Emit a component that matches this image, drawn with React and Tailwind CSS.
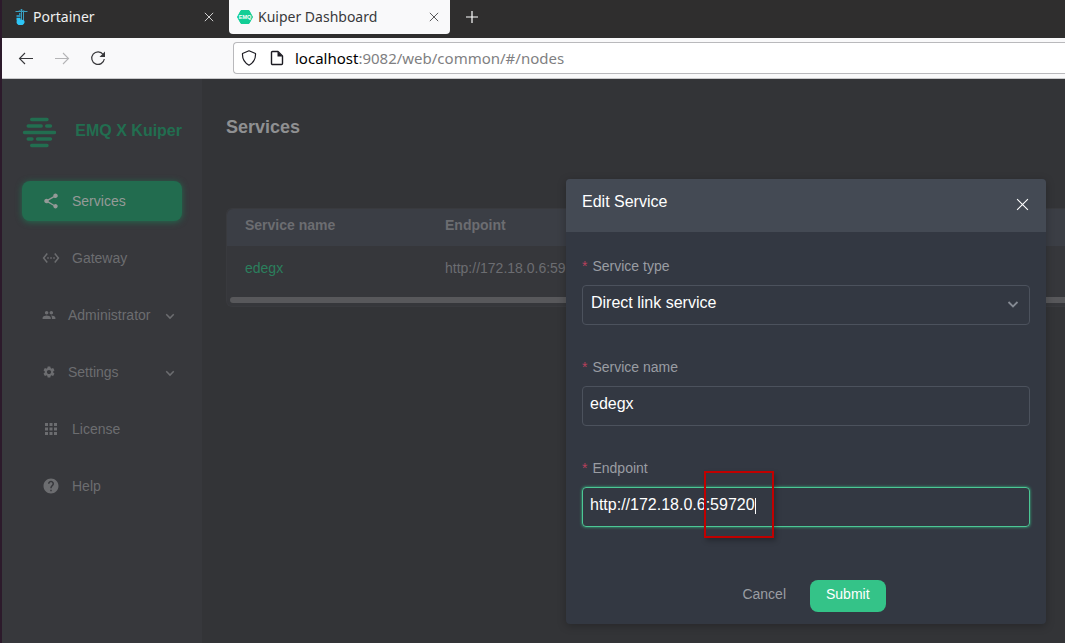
import React, { useState } from "react";
import {
  MdApps,
  MdGroup,
  MdHelp,
  MdSettings,
  MdSettingsEthernet,
  MdShare,
} from "react-icons/md";

const NAV_ITEMS = [
  { label: "Services", icon: MdShare, active: true },
  { label: "Gateway", icon: MdSettingsEthernet },
  { label: "Administrator", icon: MdGroup, expandable: true },
  { label: "Settings", icon: MdSettings, expandable: true },
  { label: "License", icon: MdApps },
  { label: "Help", icon: MdHelp },
];

function Cross({ className }) {
  return (
    <svg viewBox="0 0 12 12" className={className} fill="none" stroke="currentColor" aria-hidden="true">
      <path d="M1 1l10 10M11 1L1 11" />
    </svg>
  );
}

function Chevron({ className }) {
  return (
    <svg viewBox="0 0 12 12" className={className} fill="none" stroke="currentColor" strokeWidth="1.8" aria-hidden="true">
      <path d="M1.5 4L6 8.5 10.5 4" />
    </svg>
  );
}

function PortainerIcon() {
  return (
    <svg viewBox="0 0 16 16" className="w-4 h-4" aria-hidden="true">
      <g fill="none" stroke="#3a9fc0">
        <path d="M3.500 2.500h12M9.500 0v11M11.500 2.500v9" strokeWidth="1" />
        <path d="M6 2.500L9.500.5 13 2.500" strokeWidth=".7" />
      </g>
      <path d="M7 4h1.500v3H7zM4.500 6h4v2h-4z" fill="#2a8fb5" />
      <path d="M4.500 8.800h4v1.700l3 .5c2 1.500 1 4-1 5H6.500c-2-1-2.500-3-1.500-4.500h-.5z" fill="#2ec5f5" />
    </svg>
  );
}

function EmqIcon() {
  return (
    <svg viewBox="0 0 16 16" className="w-4 h-4" aria-hidden="true">
      <path d="M4 1.500h8l3.500 6.500-3.500 6.500H4L.5 8z" fill="#13ce96" stroke="#13ce96" strokeLinejoin="round" />
      <text x="8" y="10" textAnchor="middle" fontSize="5.5" fontWeight="bold" fill="#fff" fontFamily="Liberation Sans, sans-serif">
        EMQ
      </text>
    </svg>
  );
}

function KuiperLogo() {
  return (
    <svg viewBox="0 0 34 32" className="w-[34px] h-8" stroke="#226e50" strokeWidth="3.4" strokeLinecap="round" aria-hidden="true">
      <path d="M9.700 2.500h15.300M6.200 9h13M24.700 9h3.800M2.500 15.500h30M6.200 22h3.800M15.500 22h13M9.700 28.500h15.300" />
    </svg>
  );
}

function BrowserChrome() {
  return (
    <header className="font-['Noto_Sans',sans-serif]">
      <div className="flex items-start h-[38px] bg-[#2f2e2e] text-[14px] leading-[34px]">
        <div className="flex items-center w-[227px] h-[34px] pl-[10px] pr-[15px] text-[#f0f0f0]">
          <PortainerIcon />
          <span className="ml-[5px] flex-1">Portainer</span>
          <button aria-label="Close Portainer tab">
            <Cross className="w-[10px] h-[10px]" />
          </button>
        </div>
        <div className="flex items-center w-[221px] h-[34px] pl-2 pr-[11px] rounded-b bg-[#f9f9fa] text-[#3a3a3c]">
          <EmqIcon />
          <span className="ml-[5px] flex-1">Kuiper Dashboard</span>
          <button aria-label="Close Kuiper Dashboard tab">
            <Cross className="w-[10px] h-[10px]" />
          </button>
        </div>
        <button aria-label="New tab" className="flex items-center h-[34px] ml-4 text-white">
          <svg viewBox="0 0 12 12" className="w-3 h-3" stroke="currentColor" strokeWidth="1.2" aria-hidden="true">
            <path d="M6 0v12M0 6h12" />
          </svg>
        </button>
      </div>

      <div className="flex items-center h-[41px] pl-4 bg-[#f9f9fa] border-b border-[#c8c8ca] text-[#38383b]">
        <button aria-label="Back">
          <svg viewBox="0 0 16 16" className="w-4 h-4" fill="none" stroke="currentColor" strokeWidth="1.1" aria-hidden="true">
            <path d="M15 8.500H1.500M7 3L1.500 8.500 7 14" />
          </svg>
        </button>
        <button aria-label="Forward" className="ml-5 text-[#b4b4b6]">
          <svg viewBox="0 0 16 16" className="w-4 h-4" fill="none" stroke="currentColor" strokeWidth="1.1" aria-hidden="true">
            <path d="M1 8.500h13.500M9 3l5.500 5.500L9 14" />
          </svg>
        </button>
        <button aria-label="Reload" className="ml-5">
          <svg viewBox="0 0 16 16" className="w-4 h-4" fill="none" stroke="currentColor" strokeWidth="1.2" aria-hidden="true">
            <path d="M13.200 4.500A6.300 6.300 0 1 0 14.300 9" />
            <path d="M15 1.500v5.500H9.500z" fill="currentColor" stroke="none" />
          </svg>
        </button>
        <div className="flex flex-1 items-center h-8 ml-[127px] pl-[7px] bg-white border border-r-0 border-[#b9b9bc] rounded-l">
          <svg viewBox="0 0 16 16" className="w-4 h-4" fill="none" stroke="#1c1b22" strokeWidth="1.2" aria-hidden="true">
            <path d="M8 .8L14.500 3.500c.3 5-1.500 9-6.500 11.700C3 12.500 1.200 8.500 1.500 3.500z" strokeLinejoin="round" />
          </svg>
          <svg viewBox="0 0 16 16" className="w-4 h-4 ml-3" fill="none" stroke="#1c1b22" strokeWidth="1.4" aria-hidden="true">
            <path d="M3.500 1.500h5.500l4.500 4.500v7.500a1 1 0 0 1-1 1h-9a1 1 0 0 1-1-1v-11a1 1 0 0 1 1-1z" strokeLinejoin="round" />
            <path d="M8.500 1.500v5h5z" fill="#1c1b22" stroke="none" />
          </svg>
          <div className="ml-[10px] text-[15px] text-[#7f7f82]">
            <span className="text-black">localhost</span>:9082/web/common/#/nodes
          </div>
        </div>
      </div>
    </header>
  );
}

function Sidebar() {
  return (
    <aside className="w-[200px] shrink-0 px-5 pt-[38px] bg-[#37383c]">
      <div className="flex items-center justify-between h-8">
        <KuiperLogo />
        <span className="text-base leading-6 pb-1 font-bold text-[#226e50]">EMQ X Kuiper</span>
      </div>

      <nav className="flex flex-col gap-[17px] mt-8 text-sm">
        {NAV_ITEMS.map(({ label, icon: Icon, active, expandable }) => (
          <a
            key={label}
            href={`#/${label.toLowerCase()}`}
            className={
              active
                ? "flex items-center h-10 pl-5 rounded-lg bg-[#226c4f] text-[#959a98] shadow-[0_1px_6px_#226c4f]"
                : "flex items-center h-10 pl-5 text-[#6c6d70]"
            }
          >
            <Icon className={expandable ? "w-[14px] h-[14px]" : "w-[18px] h-[18px]"} />
            <span className="ml-3 flex-1">{label}</span>
            {expandable && <Chevron className="w-[10px] h-[10px] mt-[2px] mr-[7px]" />}
          </a>
        ))}
      </nav>
    </aside>
  );
}

function ServicesPage() {
  return (
    <main className="flex-1 min-w-0 pl-6 pt-[34px] bg-[#333437]">
      <h1 className="text-lg leading-7 font-bold text-[#8f9092]">Services</h1>
      <div className="mt-[67px] pb-[3px] rounded-l-md bg-[#36373b] border border-r-0 border-[#393a3e]">
        <table className="w-full table-fixed text-sm text-left text-[#6c6d71]">
          <thead>
            <tr className="h-[37px] bg-[#3b3e45]">
              <th className="w-[200px] pl-[18px] pb-[6px] rounded-tl-md font-bold">Service name</th>
              <th className="pl-[18px] pb-[6px] font-bold">Endpoint</th>
            </tr>
          </thead>
          <tbody>
            <tr className="h-[44px]">
              <td className="pl-[18px]">
                <a href="#/nodes/edegx" className="text-[#2b7f5d]">edegx</a>
              </td>
              <td className="pl-[18px]">http://172.18.0.6:59720</td>
            </tr>
          </tbody>
        </table>
        <div className="h-[6px] mt-[7px] ml-[3px] rounded-l-full bg-[#58585b]" />
      </div>
    </main>
  );
}

function Field({ id, label, children }) {
  return (
    <div className="flex flex-col gap-[6px]">
      <label htmlFor={id} className="flex gap-[5px] text-sm leading-[26px] text-[#9a9da3]">
        <span className="text-[#b8405c]">*</span>
        <span>{label}</span>
      </label>
      <div className="relative">{children}</div>
    </div>
  );
}

function EditServiceDialog() {
  const [name, setName] = useState("edegx");
  const [endpoint, setEndpoint] = useState("http://172.18.0.6:59720");

  return (
    <div
      role="dialog"
      aria-labelledby="dialog-title"
      className="absolute top-[100px] right-[19px] w-[480px] rounded bg-[#333842] shadow-[0_2px_8px_rgba(0,0,0,0.25)]"
    >
      <div className="flex items-center justify-between h-[53px] px-4 pb-2 rounded-t bg-[#444a54] text-white">
        <h2 id="dialog-title" className="text-base">Edit Service</h2>
        <button aria-label="Close dialog" className="mt-[5px] mr-[1px]">
          <Cross className="w-[13px] h-[13px]" />
        </button>
      </div>

      <form className="px-4 pt-[21px] pb-3" onSubmit={(e) => e.preventDefault()}>
        <div className="flex flex-col gap-[29px]">
          <Field id="service-type" label="Service type">
            <select
              id="service-type"
              className="block w-full h-10 px-2 pb-1 appearance-none rounded border border-[#4c525d] bg-transparent text-base text-white outline-none"
            >
              <option>Direct link service</option>
            </select>
            <Chevron className="absolute right-[11px] top-[13px] w-3 h-3 text-[#858a93] pointer-events-none" />
          </Field>

          <Field id="service-name" label="Service name">
            <input
              id="service-name"
              value={name}
              onChange={(e) => setName(e.target.value)}
              className="block w-full h-10 px-[7px] pb-1 rounded border border-[#4c525d] bg-transparent text-base text-white outline-none"
            />
          </Field>

          <Field id="endpoint" label="Endpoint">
            <input
              id="endpoint"
              value={endpoint}
              onChange={(e) => setEndpoint(e.target.value)}
              className="block w-full h-10 px-[7px] pb-1 rounded border border-[#4cc795] bg-transparent text-base text-white caret-white outline-none shadow-[0_0_3px_#34c388]"
            />
            {/* text cursor */}
            <div className="absolute left-[173px] top-[11px] w-px h-4 bg-white pointer-events-none" />
            {/* marks the port */}
            <div className="absolute left-[122px] -top-4 w-[70px] h-[67px] border-2 border-[#c00000] shadow-[2px_3px_5px_rgba(0,0,0,0.25)] pointer-events-none" />
          </Field>
        </div>

        <div className="flex justify-center gap-2 mt-[53px] text-sm">
          <button type="button" className="h-8 px-4 pb-1 text-[#9a9da3]">Cancel</button>
          <button type="submit" className="h-8 px-4 pb-1 rounded-lg bg-[#34c388] text-white">Submit</button>
        </div>
      </form>
    </div>
  );
}

export default function App() {
  return (
    <div className="flex flex-col min-h-screen overflow-hidden border-l-2 border-[#2c1a2b] font-['Liberation_Sans',Arial,sans-serif]">
      <BrowserChrome />
      <div className="relative flex flex-1">
        <Sidebar />
        <ServicesPage />
        <EditServiceDialog />
      </div>
    </div>
  );
}
